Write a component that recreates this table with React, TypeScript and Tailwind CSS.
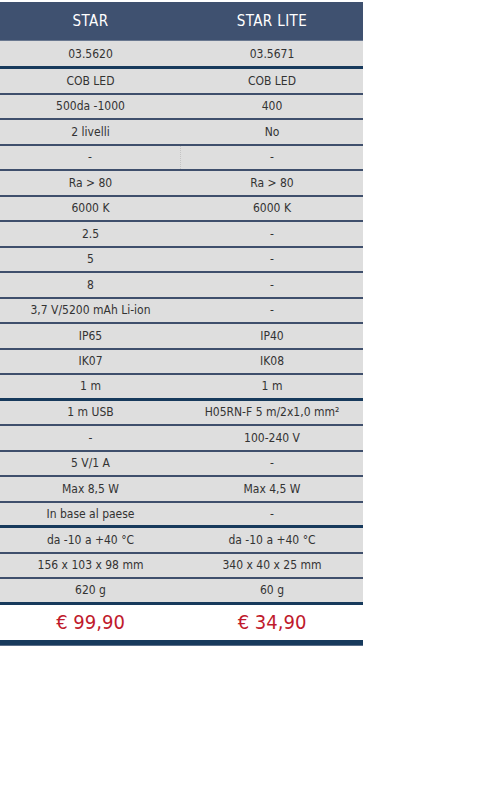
import React from "react";

type Row = { a: React.ReactNode; b: React.ReactNode; thick?: boolean; dotted?: boolean };

const rows: Row[] = [
  { a: "03.5620", b: "03.5671", thick: true },
  { a: "COB LED", b: "COB LED" },
  { a: "500da -1000", b: "400" },
  { a: "2 livelli", b: "No" },
  { a: "-", b: "-", dotted: true },
  { a: "Ra > 80", b: "Ra > 80" },
  { a: "6000 K", b: "6000 K" },
  { a: "2.5", b: "-" },
  { a: "5", b: "-" },
  { a: "8", b: "-" },
  { a: "3,7 V/5200 mAh Li-ion", b: "-" },
  { a: "IP65", b: "IP40" },
  { a: "IK07", b: "IK08" },
  { a: "1 m", b: "1 m", thick: true },
  { a: "1 m USB", b: "H05RN-F 5 m/2x1,0 mm²" },
  { a: "-", b: "100-240 V" },
  { a: "5 V/1 A", b: "-" },
  { a: "Max 8,5 W", b: "Max 4,5 W" },
  { a: "In base al paese", b: "-", thick: true },
  { a: "da -10 a +40 °C", b: "da -10 a +40 °C" },
  { a: "156 x 103 x 98 mm", b: "340 x 40 x 25 mm" },
  { a: "620 g", b: "60 g", thick: true },
];

export default function App() {
  return (
    <div className="w-[496px] h-[786px] bg-white pt-[2px]" style={{ fontFamily: '"DejaVu Sans Condensed", "DejaVu Sans", sans-serif' }}>
      <div className="w-[363px] flex flex-col">
        <div className="h-[39px] bg-[#3f5170] flex text-white text-[15px] tracking-[0.4px] border-b border-[#6a7890]">
          <div className="w-[181px] flex items-center justify-center">STAR</div>
          <div className="flex-1 flex items-center justify-center">STAR LITE</div>
        </div>
        {rows.map((r, i) => (
          <div
            key={i}
            className={
              "box-border bg-[#dedede] flex text-[12px] text-[#333333] " +
              (i === 0 ? "h-[28px] " : "h-[25.5px] ") +
              (r.thick ? "border-b-[3px] border-[#173a5c]" : "border-b-2 border-[#3f4f6c]")
            }
          >
            <div className={"w-[181px] flex items-center justify-center " + (r.dotted ? "border-r border-dotted border-[#c4c4c4]" : "")}>{r.a}</div>
            <div className="flex-1 flex items-center justify-center">{r.b}</div>
          </div>
        ))}
        <div className="h-[35px] bg-white flex text-[20px] text-[#c01a2c]">
          <div className="w-[181px] flex items-center justify-center">€ 99,90</div>
          <div className="flex-1 flex items-center justify-center">€ 34,90</div>
        </div>
        <div className="h-[6px] bg-[#173a5c] border-b border-[#5a6e88]" />
      </div>
    </div>
  );
}
